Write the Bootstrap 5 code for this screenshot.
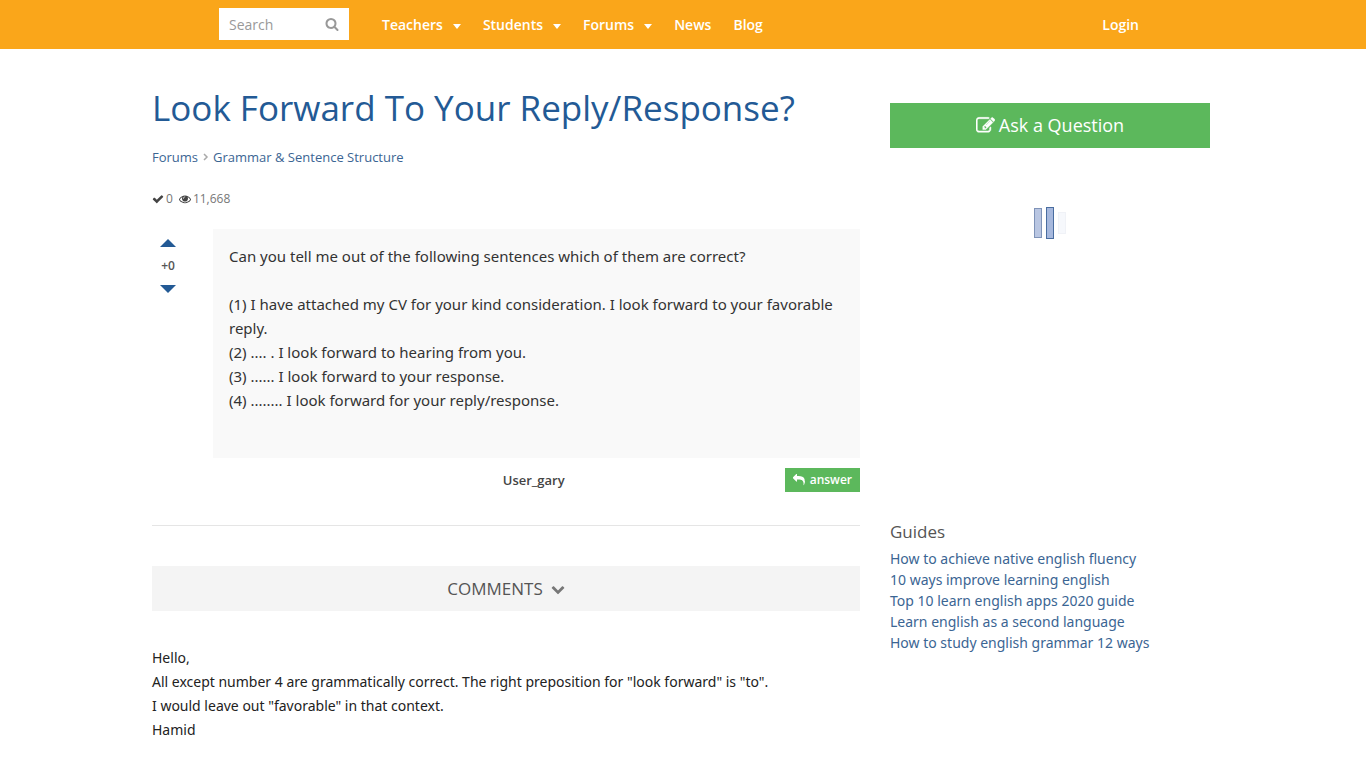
<!DOCTYPE html>
<html lang="en">
<head>
<meta charset="utf-8">
<meta name="viewport" content="width=device-width, initial-scale=1">
<title>Look Forward To Your Reply/Response?</title>
<link href="https://cdn.jsdelivr.net/npm/bootstrap@5.3.0/dist/css/bootstrap.min.css" rel="stylesheet">
<style>
body { font-family: "Open Sans", sans-serif; font-size: 14px; line-height: 21px; color: #555; }
a { color: #3b6593; text-decoration: none; }
a:hover { text-decoration: underline; }
.fa-svg { fill: currentColor; flex: none; }
.topbar { background: #faa61a; min-height: 49px; }
.topbar-inner { max-width: 928px; }
.topbar .nav-link { color: #fff; font-weight: 600; padding: 0; }
.topbar .dropdown-toggle::after { margin-left: 10px; vertical-align: 1px; border-top-width: 5px; border-left-width: 4px; border-right-width: 4px; }
.search-box { width: 130px; height: 32px; background: #fff; color: #999; padding: 0 10px; }
.search-box input { border: 0; outline: 0; width: 100%; min-width: 0; padding: 0; color: #555; }
.search-box input::placeholder { color: #999; opacity: 1; }
.search-box button { border: 0; background: none; padding: 0; color: #999; display: flex; }
.main-nav { margin-left: 33px; column-gap: 22px; }
.page { max-width: 1058px; }
.page-cols { column-gap: 30px; }
.side { width: 320px; }
h1 { font-size: 35px; line-height: 40px; color: #235a95; margin: 39px 0 0; }
.crumbs { font-size: 13px; line-height: 20px; margin-top: 19px; }
.stats { font-size: 12px; line-height: 20px; margin-top: 22px; gap: 2px; color: #777; }
.stats svg { color: #444; }
.post { margin-top: 20px; column-gap: 29px; }
.votes { width: 32px; flex: none; padding-top: 10px; font-size: 12px; line-height: 22px; font-weight: 600; }
.votes button { border: 0; background: none; padding: 0; color: #235a95; display: flex; }
.quote { background: #f9f9f9; padding: 15px 16px 46px; }
.prose { font-family: "Noto Sans", "Open Sans", sans-serif; font-size: 15px; line-height: 24px; color: #333; }
.meta { margin-top: 10px; font-size: 13px; font-weight: 600; color: #444; }
.meta-user { margin-right: 220px; }
.btn-flat { background: #5cb85c; color: #fff; border: 0; border-radius: 0; }
.btn-flat:hover { background: #449d44; color: #fff; }
.btn-answer { font-size: 12px; line-height: 24px; font-weight: 600; padding: 0 8px; gap: 5px; }
.rule { margin: 33px 0 40px; border-color: #999; }
.comments-bar { background: #f4f4f4; border: 0; color: #555; font-size: 17px; line-height: 45px; padding: 0; gap: 8px; }
.comments-bar svg { color: #777; }
.answer-text { font-size: 14px; color: #222; margin-top: 35px; }
.btn-ask { font-size: 18px; line-height: 45px; padding: 0; margin-top: 54px; gap: 4px; font-weight: 500; }
.ad-slot { height: 373px; padding-top: 58px; }
.guides h2 { font-size: 17px; line-height: 22px; margin: 0 0 5px; }
.guides ul { font-family: "Noto Sans", "Open Sans", sans-serif; }
</style>
</head>
<body>
<svg class="d-none" aria-hidden="true">
<symbol id="i-search" viewBox="0 0 1792 1792"><path d="M1216 832q0-185-131.500-316.500t-316.500-131.500-316.500 131.500-131.500 316.500 131.500 316.500 316.500 131.500 316.500-131.500 131.500-316.500zm512 832q0 52-38 90t-90 38q-54 0-90-38l-343-342q-179 124-399 124-143 0-273.500-55.500t-225-150-150-225-55.500-273.500 55.500-273.500 150-225 225-150 273.500-55.500 273.500 55.500 225 150 150 225 55.500 273.500q0 220-124 399l343 343q37 37 37 90z"/></symbol>
<symbol id="i-check" viewBox="0 0 1792 1792"><path d="M1671 566q0 40-28 68l-724 724-136 136q-28 28-68 28t-68-28l-136-136-362-362q-28-28-28-68t28-68l136-136q28-28 68-28t68 28l294 295 656-657q28-28 68-28t68 28l136 136q28 28 28 68z"/></symbol>
<symbol id="i-eye" viewBox="0 0 1792 1792"><path d="M1664 960q-152-236-381-353 61 104 61 225 0 185-131.500 316.500t-316.500 131.500-316.500-131.500-131.500-316.500q0-121 61-225-229 117-381 353 133 205 333.500 326.500t434.500 121.500 434.500-121.500 333.500-326.500zm-720-384q0-20-14-34t-34-14q-125 0-214.500 89.500t-89.500 214.500q0 20 14 34t34 14 34-14 14-34q0-86 61-147t147-61q20 0 34-14t14-34zm848 384q0 34-20 69-140 230-376.500 368.500t-499.500 138.500-499.500-139-376.500-368q-20-35-20-69t20-69q140-229 376.500-368t499.500-139 499.500 139 376.500 368q20 35 20 69z"/></symbol>
<symbol id="i-reply" viewBox="0 0 1792 1792"><path d="M1792 1120q0 166-127 451-3 7-10.500 24t-13.500 30-13 22q-12 17-28 17-15 0-23.500-10t-8.500-25q0-9 2.500-26.500t2.500-23.500q5-68 5-123 0-112-19.500-200.500t-54-153.500-89-112.500-114.500-79.500-142-49-163-30-175-8h-224v256q0 26-19 45t-45 19-45-19l-512-512q-19-19-19-45t19-45l512-512q19-19 45-19t45 19 19 45v256h224q713 0 875 403 53 134 53 333z"/></symbol>
<symbol id="i-edit" viewBox="0 0 1792 1792"><path d="M888 1184l116-116-152-152-116 116v56h96v96h56zm440-720q-16-16-33 1l-350 350q-17 17-1 33t33-1l350-350q17-17 1-33zm80 594v190q0 119-84.500 203.500t-203.500 84.500h-832q-119 0-203.500-84.500t-84.500-203.500v-832q0-119 84.500-203.500t203.500-84.500h832q63 0 117 25 15 7 18 23 3 17-9 29l-49 49q-14 14-32 8-23-6-45-6h-832q-66 0-113 47t-47 113v832q0 66 47 113t113 47h832q66 0 113-47t47-113v-126q0-13 9-22l64-64q15-15 35-7t20 29zm-96-738l288 288-672 672h-288v-288zm444 132l-92 92-288-288 92-92q28-28 68-28t68 28l152 152q28 28 28 68t-28 68z"/></symbol>
<symbol id="i-down" viewBox="0 0 1792 1792"><path d="M1683 808l-742 741q-19 19-45 19t-45-19l-742-741q-19-19-19-45.500t19-45.500l166-165q19-19 45-19t45 19l531 531 531-531q19-19 45-19t45 19l166 165q19 19 19 45.500t-19 45.500z"/></symbol>
</svg>

<header class="topbar py-2">
  <div class="topbar-inner container-fluid px-0 d-flex flex-wrap align-items-center">
    <form class="search-box d-flex align-items-center" role="search">
      <input type="search" placeholder="Search" aria-label="Search">
      <button type="submit" aria-label="Submit search"><svg class="fa-svg" width="14" height="14"><use href="#i-search"/></svg></button>
    </form>
    <nav class="main-nav d-flex flex-wrap" aria-label="Main">
      <a class="nav-link dropdown-toggle" href="#">Teachers</a>
      <a class="nav-link dropdown-toggle" href="#">Students</a>
      <a class="nav-link dropdown-toggle" href="#">Forums</a>
      <a class="nav-link" href="#">News</a>
      <a class="nav-link" href="#">Blog</a>
    </nav>
    <a class="nav-link ms-auto me-2" href="#">Login</a>
  </div>
</header>

<div class="pe-1">
<div class="page container-fluid px-0">
  <div class="page-cols d-flex flex-wrap flex-lg-nowrap align-items-start">
    <main class="flex-grow-1">
      <h1 class="fw-normal">Look Forward To Your Reply/Response?</h1>
      <nav class="crumbs d-flex align-items-center" aria-label="Breadcrumb">
        <a href="#">Forums</a>
        <svg class="mx-1" width="7" height="8" viewBox="0 0 7 8" fill="none" stroke="#aaa" stroke-width="1.500"><path d="M2 1l3 3-3 3"/></svg>
        <a href="#">Grammar &amp; Sentence Structure</a>
      </nav>
      <div class="stats d-flex align-items-center">
        <svg class="fa-svg" width="12" height="12"><use href="#i-check"/></svg><span class="me-1">0</span>
        <svg class="fa-svg" width="12" height="12"><use href="#i-eye"/></svg><span>11,668</span>
      </div>
      <div class="post d-flex">
        <div class="votes d-flex flex-column align-items-center">
          <button type="button" aria-label="Vote up"><svg class="fa-svg" width="16" height="8" viewBox="0 0 16 8"><path d="M0 8L8 0l8 8z"/></svg></button>
          <span class="my-2">+0</span>
          <button type="button" aria-label="Vote down"><svg class="fa-svg" width="16" height="8" viewBox="0 0 16 8"><path d="M0 0l8 8 8-8z"/></svg></button>
        </div>
        <div class="quote prose flex-fill">Can you tell me out of the following sentences which of them are correct?<br><br>(1) I have attached my CV for your kind consideration. I look forward to your favorable reply.<br>(2) .... . I look forward to hearing from you.<br>(3) ...... I look forward to your response.<br>(4) ........ I look forward for your reply/response.</div>
      </div>
      <div class="meta d-flex align-items-center justify-content-end">
        <span class="meta-user">User_gary</span>
        <button type="button" class="btn btn-flat btn-answer d-flex align-items-center"><svg class="fa-svg" width="12" height="12"><use href="#i-reply"/></svg>answer</button>
      </div>
      <hr class="rule">
      <button type="button" class="comments-bar w-100 d-flex align-items-center justify-content-center">COMMENTS <svg class="fa-svg" width="14" height="14"><use href="#i-down"/></svg></button>
      <div class="prose answer-text">Hello,<br>All except number 4 are grammatically correct. The right preposition for "look forward" is "to".<br>I would leave out "favorable" in that context.<br>Hamid</div>
    </main>
    <aside class="side flex-shrink-0">
      <button type="button" class="btn btn-flat btn-ask w-100 d-flex align-items-center justify-content-center"><svg class="fa-svg" width="19" height="19" stroke="currentColor" stroke-width="40"><use href="#i-edit"/></svg>Ask a Question</button>
      <div class="ad-slot d-flex justify-content-center align-items-start">
        <svg width="32" height="34" viewBox="0 0 32 34" role="img" aria-label="Loading">
          <rect x=".5" y="2.500" width="7" height="29" fill="#b9c6e2" stroke="#7f93b8"/>
          <rect x="12.500" y="1.500" width="7" height="31" fill="#a6b8dd" stroke="#496da0"/>
          <rect x="24.500" y="6.500" width="7" height="21" fill="#f6f8fc" stroke="#f0f2f7"/>
        </svg>
      </div>
      <section class="guides">
        <h2 class="fw-normal">Guides</h2>
        <ul class="list-unstyled mb-0">
          <li><a href="#">How to achieve native english fluency</a></li>
          <li><a href="#">10 ways improve learning english</a></li>
          <li><a href="#">Top 10 learn english apps 2020 guide</a></li>
          <li><a href="#">Learn english as a second language</a></li>
          <li><a href="#">How to study english grammar 12 ways</a></li>
        </ul>
      </section>
    </aside>
  </div>
</div>
</div>
<script src="https://cdn.jsdelivr.net/npm/bootstrap@5.3.0/dist/js/bootstrap.bundle.min.js"></script>
</body>
</html>
